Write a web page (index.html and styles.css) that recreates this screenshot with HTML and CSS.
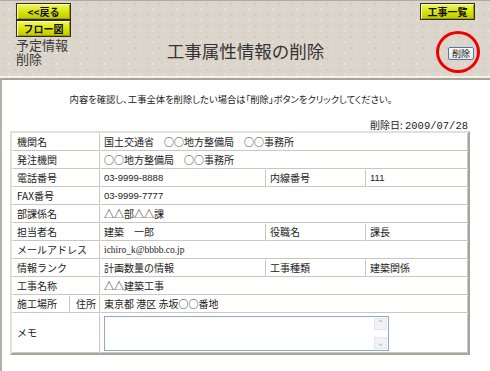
FILE: index.html
```html
<!DOCTYPE html>
<html lang="ja">
<head>
<meta charset="utf-8">
<title>工事属性情報の削除</title>
<link rel="stylesheet" href="styles.css">
</head>
<body>
<header class="head">
  <div class="head-left">
    <button class="ybtn" type="button">&lt;&lt;戻る</button>
    <button class="ybtn" type="button">フロー図</button>
    <div class="subtitle"><span class="sub-line">予定情報</span><span class="sub-line">削除</span></div>
  </div>
  <h1 class="title">工事属性情報の削除</h1>
  <div class="head-right">
    <button class="ybtn" type="button">工事一覧</button>
    <div class="del-wrap">
      <button class="del-btn" type="button">削除</button>
      <span class="ring"></span>
    </div>
  </div>
</header>
<main class="main">
  <p class="msg">内容を確認し、工事全体を削除したい場合は「削除」ボタンをクリックしてください。</p>
  <p class="date">削除日: <span class="num">2009/07/28</span></p>
  <table class="info">
    <colgroup>
      <col class="c1"><col class="c2"><col class="c3"><col class="c4"><col class="c5">
    </colgroup>
    <tr><th colspan="2">機関名</th><td colspan="3">国土交通省　○○地方整備局　○○事務所</td></tr>
    <tr><th colspan="2">発注機関</th><td colspan="3">○○地方整備局　○○事務所</td></tr>
    <tr><th colspan="2">電話番号</th><td class="n">03-9999-8888</td><th class="th2">内線番号</th><td class="n v2">111</td></tr>
    <tr><th colspan="2">FAX番号</th><td colspan="3" class="n">03-9999-7777</td></tr>
    <tr><th colspan="2">部課係名</th><td colspan="3">△△部△△課</td></tr>
    <tr><th colspan="2">担当者名</th><td>建築　一郎</td><th class="th2">役職名</th><td class="v2">課長</td></tr>
    <tr><th colspan="2">メールアドレス</th><td colspan="3" class="mail">ichiro_k@bbbb.co.jp</td></tr>
    <tr><th colspan="2">情報ランク</th><td>計画数量の情報</td><th class="th2">工事種類</th><td class="v2">建築関係</td></tr>
    <tr><th colspan="2">工事名称</th><td colspan="3">△△建築工事</td></tr>
    <tr><th>施工場所</th><th class="sub">住所</th><td colspan="3">東京都 港区 赤坂○○番地</td></tr>
    <tr class="memo-row"><th colspan="2">メモ</th><td colspan="3">
      <div class="memo">
        <textarea class="memo-text" aria-label="メモ"></textarea>
        <div class="sbar"><span class="sb-btn">&#8963;</span><span class="sb-btn">&#8964;</span></div>
      </div>
    </td></tr>
  </table>
</main>
</body>
</html>
```
FILE: styles.css
```css
* { box-sizing: border-box; }
html, body { margin: 0; padding: 0; }
body {
  width: 490px;
  height: 371px;
  overflow: hidden;
  background: #fff;
  color: #222;
  font-family: "Noto Sans CJK JP", sans-serif;
}

.head {
  height: 78px;
  border-top: 1px solid #b3ab9f;
  border-bottom: 2px solid #f4f1e8;
  background-color: #dcd5cb;
  background-image:
    radial-gradient(circle at 3px 3px, #d0c5b8 0.6px, transparent 1.3px),
    radial-gradient(circle at 9px 8px, #e6e0d7 0.6px, transparent 1.3px);
  background-size: 12px 11px;
  display: grid;
  grid-template-columns: 55px 1fr 55px;
  padding: 2px 15px 0 16px;
}

.ybtn {
  display: block;
  width: 55px;
  height: 17px;
  margin: 0;
  padding: 0;
  border: 1px solid #2e2e1a;
  background: linear-gradient(#f2f66a, #dde80e 45%, #bfc800);
  box-shadow: inset 1px 1px 0 #fbfdc0, inset -1px -1px 0 #9aa000;
  color: #111;
  font: bold 10px/15px "Noto Sans CJK JP", sans-serif;
  text-align: center;
}

.subtitle {
  margin-top: 1px;
  font-size: 13px;
  color: #3a3a3a;
  white-space: nowrap;
}
.sub-line {
  display: block;
  height: 14px;
  line-height: 14px;
}

.title {
  margin: 38px 0 0;
  text-align: center;
  font-size: 17.5px;
  font-weight: normal;
  line-height: 20px;
  color: #333;
}

.head-right {
  display: flex;
  flex-direction: column;
  align-items: flex-end;
}

.del-wrap {
  position: relative;
  margin-top: 27px;
  margin-right: 1px;
}

.del-btn {
  display: block;
  width: 26px;
  height: 13px;
  margin: 0;
  padding: 0;
  border: 1px solid #4f78a6;
  border-radius: 2px;
  background: linear-gradient(#ffffff, #ece9df);
  color: #111;
  font: 9px/11px "Noto Sans CJK JP", sans-serif;
  text-align: center;
}

.ring {
  position: absolute;
  left: -12px;
  top: -16px;
  width: 44px;
  height: 42px;
  border: 3px solid #ee0000;
  border-radius: 50%;
}

.main {
  min-height: 293px;
  border-top: 2px solid #a8a197;
  border-left: 2px solid #b4b0a8;
}

.msg {
  margin: 0;
  padding: 12px 30px 0 0;
  text-align: center;
  font-size: 9.3px;
  line-height: 14px;
  font-feature-settings: "palt";
  color: #222;
}

.date {
  margin: 14px 0 0;
  padding-right: 22px;
  text-align: right;
  font-size: 10px;
  line-height: 10px;
  color: #222;
}
.date .num { font-family: "Liberation Mono", monospace; font-size: 10.5px; }

.info {
  margin: 0 0 0 8px;
  width: 460px;
  table-layout: fixed;
  border-collapse: separate;
  border-spacing: 0;
  border: 2px solid;
  border-color: #e4e0d7 #aaa59c #aaa59c #e4e0d7;
  background: #fff;
}
.c1 { width: 58px; }
.c2 { width: 30px; }
.c3 { width: 166px; }
.c4 { width: 100px; }
.c5 { width: 102px; }

.info tr { height: 18px; }
.info th, .info td {
  border: 1px solid;
  border-color: #fff #cbc7bf #cbc7bf #fff;
  font-size: 10px;
  line-height: 12px;
  vertical-align: middle;
  white-space: nowrap;
  overflow: hidden;
  color: #222;
}
.info th { font-weight: normal; text-align: left; padding: 0 4px; }
.info td { padding: 0 3px; }
.info th.sub { padding-left: 5px; }
.info th.th2 { padding-left: 3px; }
.info td.v2 { padding-left: 3px; }
.info td.n { font-family: "Liberation Sans", sans-serif; font-size: 9.5px; }
.info td.mail { font-family: "Liberation Serif", serif; font-size: 9.5px; }

.info tr.memo-row { height: 40px; }

.memo {
  display: flex;
  width: 285px;
  height: 35px;
  border: 1px solid #8ea8c8;
  background: #fff;
}
.memo-text {
  flex: 1;
  margin: 0;
  padding: 0;
  border: 0;
  resize: none;
  outline: none;
  overflow: hidden;
}
.sbar {
  width: 14px;
  display: flex;
  flex-direction: column;
  justify-content: space-between;
  padding: 1px 1px 1px 0;
}
.sb-btn {
  display: block;
  height: 12px;
  border: 1px solid #e2e6ee;
  background: #f0f2f6;
  color: #b8c0cc;
  font: 10px/10px "DejaVu Sans", sans-serif;
  text-align: center;
}
```
